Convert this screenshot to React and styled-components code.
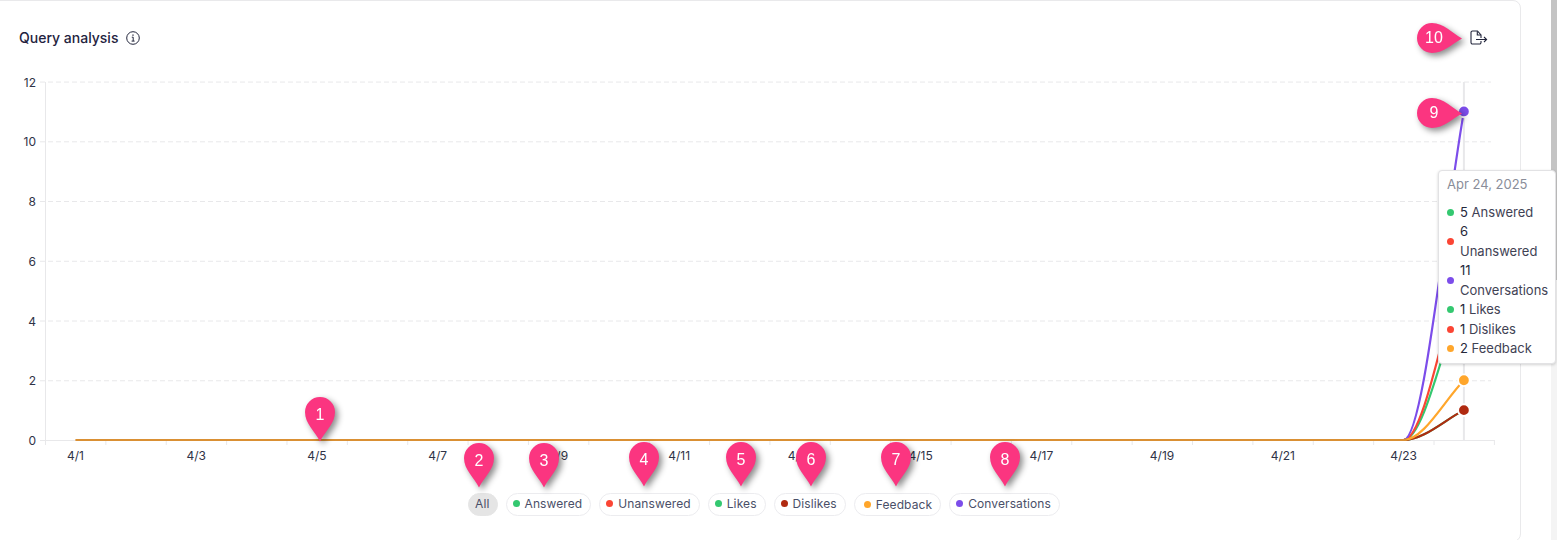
import React from "react";
import styled, { createGlobalStyle } from "styled-components";

const Global = createGlobalStyle`
  html, body { margin: 0; padding: 0; height: 540px; overflow: hidden; background: #fff; }
  body { font-family: Inter, "Liberation Sans", sans-serif; }
`;

const Page = styled.div`
  position: relative;
  display: flex;
  width: 1557px;
  height: 540px;
  overflow: hidden;
`;

const Card = styled.section`
  box-sizing: border-box;
  width: 1529px;
  height: 542px;
  margin-left: -8px;
  padding: 25px 0 0 7px;
  border: 1px solid #e9e9eb;
  border-radius: 8px;
  flex: none;
`;

const Header = styled.header`
  display: flex;
  align-items: center;
  justify-content: space-between;
  height: 24px;
  padding: 0 32px 0 19px;
  margin-bottom: 20px;
`;

const TitleGroup = styled.div`
  display: flex;
  align-items: center;
  gap: 8px;
`;

const Title = styled.h2`
  margin: 0;
  font-size: 14px;
  line-height: 24px;
  font-weight: 500;
  color: #1f2340;
`;

const IconSvg = styled.svg`
  display: block;
  flex: none;
`;

const ChartSvg = styled.svg`
  display: block;
  width: 1520px;
  height: 400px;
  text {
    font-family: Inter, "Liberation Sans", sans-serif;
    font-size: 12px;
    fill: #2f3347;
  }
`;

const Legend = styled.div`
  display: flex;
  justify-content: center;
  gap: 8px;
  margin-top: 23px;
  padding-left: 8px;
`;

const Pill = styled.button`
  box-sizing: border-box;
  display: flex;
  align-items: center;
  gap: 5px;
  height: 23px;
  padding: 0 ${(p) => (p.$active ? "7px" : "8px")} ${(p) => (p.$low ? "0" : "2px")} ${(p) => (p.$low ? "9px" : "6px")};
  border: 1px solid ${(p) => (p.$active ? "#e5e5e5" : "#ececef")};
  border-radius: 12px;
  background: ${(p) => (p.$active ? "#e5e5e5" : "#fff")};
  color: #4a4f68;
  font: 400 12px/1 Inter, "Liberation Sans", sans-serif;
  letter-spacing: 0.1px;
`;

const Dot = styled.span`
  width: 7px;
  height: 7px;
  border-radius: 50%;
  background: ${(p) => p.$color};
  flex: none;
`;

const Scrollbar = styled.div`
  width: 6px;
  height: 540px;
  margin-left: auto;
  background: #f4f4f4;
  flex: none;
`;

const Thumb = styled.div`
  height: 280px;
  background: #c4c4c4;
`;

const Tooltip = styled.div`
  position: absolute;
  left: 1438px;
  top: 170px;
  box-sizing: border-box;
  width: 118px;
  height: 194px;
  padding: 5px 8px 0 8px;
  background: #fff;
  border: 1px solid #e2e2e4;
  border-radius: 4px;
  box-shadow: 0 1px 3px rgba(0, 0, 0, 0.18);
`;

const TipDate = styled.div`
  font-size: 13px;
  line-height: 16px;
  color: #8a8d99;
  margin-bottom: 10.7px;
`;

const TipRow = styled.div`
  display: flex;
  align-items: center;
  gap: 6px;
  font-size: 13px;
  line-height: 19.5px;
  color: #3f4254;
  b {
    font-weight: 400;
    color: #25283a;
  }
`;

const PinBox = styled.div`
  position: absolute;
  left: ${(p) => p.$x}px;
  top: ${(p) => p.$y}px;
  width: ${(p) => (p.$side ? 46 : 30)}px;
  height: ${(p) => (p.$side ? 30 : 45)}px;
  filter: drop-shadow(3px 3px 3px rgba(0, 0, 0, 0.45));
`;

const PinLabel = styled.span`
  position: absolute;
  left: 0;
  top: 0;
  width: ${(p) => (p.$side ? 34 : 30)}px;
  height: ${(p) => (p.$side ? 30 : 36)}px;
  display: flex;
  align-items: center;
  justify-content: center;
  color: #fff;
  font: 400 16px/1 "Liberation Sans", Arial, sans-serif;
`;

const PINK = "#fb3580";

function Pin({ n, x, y, side }) {
  return (
    <PinBox $x={x} $y={y} $side={side}>
      {side ? (
        <IconSvg width="46" height="30" viewBox="0 0 46 30">
          <path d="M45 15.5C35 10 27 0 15 0A15 15 0 0 0 15 30C27 30 35 21 45 15.5Z" fill={PINK} />
        </IconSvg>
      ) : (
        <IconSvg width="30" height="45" viewBox="0 0 30 45">
          <path d="M15 44.5C10 34 0 27 0 15A15 15 0 0 1 30 15C30 27 20 34 15 44.5Z" fill={PINK} />
        </IconSvg>
      )}
      <PinLabel $side={side}>{n}</PinLabel>
    </PinBox>
  );
}

const COLORS = {
  answered: "#34c870",
  unanswered: "#fb4534",
  likes: "#34c870",
  dislikes: "#b02a10",
  feedback: "#ffa62b",
  conversations: "#7c4dea",
};

const Y = (v) => 440 - v * 29.87;
const STEP = 60.37;
const X = (i) => 75.4 + i * STEP;

const series = [
  ["answered", 5],
  ["unanswered", 6],
  ["conversations", 11],
  ["likes", 1],
  ["dislikes", 1],
  ["feedback", 2],
];

const curve = (v) => {
  const y = Y(v);
  const x0 = X(22);
  const x1 = X(23);
  return `M${x0} 440C${x0 + 20.1} 440 ${x1 - 20.1} ${440 + 0.65 * (y - 440)} ${x1} ${y}`;
};

const legend = [
  ["Answered", COLORS.answered],
  ["Unanswered", COLORS.unanswered],
  ["Likes", COLORS.likes],
  ["Dislikes", COLORS.dislikes],
  ["Feedback", COLORS.feedback, true],
  ["Conversations", COLORS.conversations],
];

const tips = [
  [5, "Answered", COLORS.answered],
  [6, "Unanswered", COLORS.unanswered],
  [11, "Conversations", COLORS.conversations],
  [1, "Likes", COLORS.likes],
  [1, "Dislikes", COLORS.unanswered],
  [2, "Feedback", COLORS.feedback],
];

const pins = [
  [1, 305, 397],
  [2, 464, 443],
  [3, 529, 443],
  [4, 629, 442],
  [5, 726, 442],
  [6, 796, 442],
  [7, 881, 442],
  [8, 990, 442],
];

const InfoIcon = () => (
  <IconSvg width="14" height="14" viewBox="0 0 14 14" fill="none" stroke="#23263c" strokeWidth="1">
    <circle cx="7" cy="7" r="6.3" />
    <path d="M5.8 6.2H7.2V10M5.6 10.1H8.6" />
    <path d="M7 3.6V4.8" strokeWidth="1.3" />
  </IconSvg>
);

const ExportIcon = () => (
  <IconSvg width="18" height="16" viewBox="0 0 18 16" fill="none" stroke="#23263c" strokeWidth="1.1">
    <path d="M11 8V5L7.5 1H2.5A1.5 1.5 0 0 0 1 2.5V12.5A1.5 1.5 0 0 0 2.5 14H9.5A1.5 1.5 0 0 0 11 12.5V11" />
    <path d="M7.3 1.2V5H11" />
    <path d="M6 9.5H16.5M14 7L16.6 9.5L14 12" />
  </IconSvg>
);

export default function App() {
  return (
    <Page>
      <Global />
      <Card>
        <Header>
          <TitleGroup>
            <Title>Query analysis</Title>
            <InfoIcon />
          </TitleGroup>
          <ExportIcon />
        </Header>
        <ChartSvg viewBox="0 70 1520 400">
          {[2, 4, 6, 8, 10, 12].map((v) => (
            <line key={v} x1="40" x2="1491" y1={Y(v) + 0.5} y2={Y(v) + 0.5} stroke="#e8e8ea" strokeDasharray="5 3" />
          ))}
          <line x1="45.5" x2="45.5" y1="82" y2="445" stroke="#e8e8ea" />
          <line x1="40" x2="1494.5" y1="440.5" y2="440.5" stroke="#e8e8ea" />
          {Array.from({ length: 25 }, (_, i) => (
            <line key={i} x1={45.5 + i * STEP} x2={45.5 + i * STEP} y1="440" y2="445" stroke="#e8e8ea" />
          ))}
          <line x1={X(23)} x2={X(23)} y1="82" y2="440" stroke="#e8e8ea" strokeWidth="2" />
          {[0, 2, 4, 6, 8, 10, 12].map((v) => (
            <text key={v} x="36" y={Y(v) + 5} textAnchor="end">
              {v}
            </text>
          ))}
          {Array.from({ length: 12 }, (_, i) => (
            <text key={i} x={X(i * 2)} y="460" textAnchor="middle">
              {`4/${1 + i * 2}`}
            </text>
          ))}
          {series.map(([name, v]) => (
            <path key={name} d={curve(v)} fill="none" stroke={COLORS[name]} strokeWidth="2.2" />
          ))}
          <line x1={X(0)} x2={X(22) + 3} y1="440" y2="440" stroke="#da9034" strokeWidth="2" />
          {series.map(([name, v]) => (
            <circle key={name} cx={X(23)} cy={Y(v)} r="5.8" fill={COLORS[name]} stroke="#fff" strokeWidth="1.8" />
          ))}
        </ChartSvg>
        <Legend>
          <Pill $active>All</Pill>
          {legend.map(([name, color, low]) => (
            <Pill key={name} $low={low}>
              <Dot $color={color} />
              {name}
            </Pill>
          ))}
        </Legend>
      </Card>
      <Scrollbar>
        <Thumb />
      </Scrollbar>
      <Tooltip>
        <TipDate>Apr 24, 2025</TipDate>
        {tips.map(([n, name, color]) => (
          <TipRow key={name}>
            <Dot $color={color} />
            <span>
              <b>{n}</b> {name}
            </span>
          </TipRow>
        ))}
      </Tooltip>
      {pins.map(([n, x, y]) => (
        <Pin key={n} n={n} x={x} y={y} />
      ))}
      <Pin n={9} x={1417} y={98} side />
      <Pin n={10} x={1417} y={23} side />
    </Page>
  );
}
